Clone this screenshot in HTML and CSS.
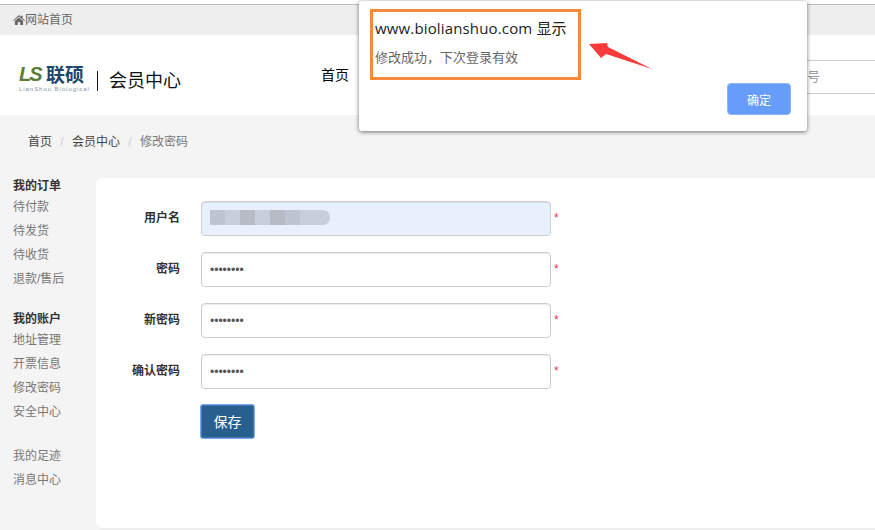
FILE: index.html
```html
<!DOCTYPE html>
<html lang="zh-CN">
<head>
<meta charset="utf-8">
<title>修改密码</title>
<link rel="stylesheet" href="styles.css">
</head>
<body>
<div class="topbar">
  <svg class="home" viewBox="0 0 12 10" aria-hidden="true"><path d="M6 0 L8 1.8 V.8 H9.6 V3.2 L12 5.4 L11.3 6.1 L6 1.5 L.7 6.1 L0 5.4 Z M1.9 6 L6 2.5 L10.1 6 V10 H7.2 V7 H4.8 V10 H1.9 Z"/></svg>
  <span>网站首页</span>
</div>
<header class="header">
  <div class="logo">
    <div class="logo-top"><span class="logo-ls">LS</span><span class="logo-cn">联硕</span></div>
    <div class="logo-en">LianShuo Biological</div>
  </div>
  <div class="logo-sep"></div>
  <div class="logo-title">会员中心</div>
  <nav class="nav"><a>首页</a></nav>
  <div class="search">号</div>
</header>
<div class="crumbs">
  <span>首页</span><i>/</i><span>会员中心</span><i>/</i><span class="cur">修改密码</span>
</div>
<main class="content">
  <aside class="side">
    <h4>我的订单</h4>
    <a>待付款</a><a>待发货</a><a>待收货</a><a>退款/售后</a>
    <h4 class="gap">我的账户</h4>
    <a>地址管理</a><a>开票信息</a><a>修改密码</a><a>安全中心</a>
    <a class="gap2">我的足迹</a><a>消息中心</a>
  </aside>
  <section class="card">
    <div class="row">
      <label>用户名</label>
      <div class="field filled"><div class="mosaic"><b></b><b class="l"></b><b class="d"></b><b class="l"></b><b class="d"></b><b></b><b class="l"></b><b class="l"></b></div></div>
      <em>*</em>
    </div>
    <div class="row">
      <label>密码</label>
      <input class="field" type="password" value="12345678">
      <em>*</em>
    </div>
    <div class="row">
      <label>新密码</label>
      <input class="field" type="password" value="12345678">
      <em>*</em>
    </div>
    <div class="row">
      <label>确认密码</label>
      <input class="field" type="password" value="12345678">
      <em>*</em>
    </div>
    <button class="save" type="button">保存</button>
  </section>
</main>
<div class="dialog">
  <div class="dlg-title">www.biolianshuo.com 显示</div>
  <div class="dlg-msg">修改成功，下次登录有效</div>
  <button class="dlg-ok" type="button">确定</button>
</div>
<div class="mark-box"></div>
<svg class="mark-arrow" viewBox="0 0 64 27" aria-hidden="true"><path d="M0 1 L18 0 L19 4 L63 26 L17 11 L12 15 Z"/></svg>
</body>
</html>
```
FILE: styles.css
```css
* { box-sizing: border-box; }
html, body { margin: 0; height: 530px; overflow: hidden; }
body {
  background: #f4f4f4;
  color: #333;
  font: 12px/20px "Liberation Sans", "Noto Sans CJK SC", sans-serif;
  padding-top: 4px;
  position: relative;
  box-shadow: inset 0 4px 0 #fff;
}
.topbar {
  height: 31px;
  background: #eee;
  border-top: 1px solid #bdbdbd;
  padding: 0 0 1px 13px;
  display: flex;
  align-items: center;
  color: #666;
}
.home { width: 12px; height: 10px; fill: #666; margin-right: 0; }
.header {
  height: 80px;
  background: #fff;
  display: flex;
  align-items: center;
  padding-left: 19px;
  position: relative;
}
.logo { width: 66px; margin-top: 7px; }
.logo-top { display: flex; align-items: center; height: 18px; }
.logo-ls {
  font: italic bold 20px/18px "Liberation Sans", sans-serif;
  color: #5b7e35;
  letter-spacing: -2px;
  width: 27px;
}
.logo-cn {
  font: bold 19px/18px "Noto Sans CJK SC", sans-serif;
  color: #20466a;
  white-space: nowrap;
}
.logo-en {
  font: 6px/7px "Liberation Sans", sans-serif;
  color: #7f93a8;
  letter-spacing: .95px;
  white-space: nowrap;
  margin-top: 3px;
}
.logo-sep { width: 1px; height: 20px; background: #111; margin: 11px 0 0 12px; }
.logo-title { font-size: 18px; color: #111; margin: 11px 0 0 11px; }
.nav { margin: 0 0 0 140px; color: #000; font-size: 14px; padding-bottom: 1px; }
.search {
  position: absolute;
  left: 795px;
  right: 0;
  top: 25px;
  height: 34px;
  border: 1px solid #ccc;
  border-width: 1px 0;
  padding-left: 12px;
  line-height: 32px;
  color: #999;
  font-size: 13px;
}
.crumbs {
  height: 63px;
  padding: 17px 0 0 28px;
  display: flex;
  color: #444;
}
.crumbs i { font-style: normal; color: #ccc; width: 20px; text-align: center; }
.crumbs .cur { color: #777; }
.content { display: flex; height: 350px; }
.side { width: 96px; padding: 0 0 0 13px; color: #777; }
.side h4 { margin: 0 0 1px; font-size: 12px; line-height: 16px; color: #333; font-weight: bold; }
.side a { display: block; line-height: 24px; }
.side h4.gap { margin: 20px 0 1px; }
.side a.gap2 { margin-top: 20px; }
.card {
  flex: 1;
  background: #fff;
  border-radius: 6px 0 0 6px;
  padding: 23px 0 0 0;
  display: flex;
  flex-direction: column;
  box-shadow: 0 2px 0 #eee;
}
.row { display: flex; align-items: center; height: 35px; margin-bottom: 16px; }
.row label { width: 84px; text-align: right; margin-right: 21px; padding-bottom: 2px; color: #333; font-weight: bold; }
.field {
  width: 350px;
  height: 35px;
  border: 1px solid #ccc;
  border-radius: 4px;
  background: #fff;
  padding: 0 8px;
  color: #555;
  font: 12px "Liberation Sans", sans-serif;
  outline: none;
  box-shadow: inset 0 1px 1px rgba(0,0,0,.075);
}
.filled { background: #e8f0fe; padding: 8px 8px; }
.mosaic {
  display: flex;
  width: 120px;
  height: 15px;
  border-radius: 0 7px 7px 0;
  overflow: hidden;
}
.mosaic b { flex: 1; background: #bfc5d0; }
.mosaic b.d { background: #b7bbc6; }
.mosaic b.l { background: #c8cedb; }
.row em { font-style: normal; color: #f0325a; margin-left: 3px; font-size: 12px; line-height: 14px; padding-bottom: 1px; }
.save {
  align-self: flex-start;
  margin: -1px 0 0 104px;
  width: 55px;
  height: 35px;
  background: #285f8f;
  color: #fff;
  border: 1px solid #7aa7ee;
  border-radius: 3px;
  box-shadow: inset 0 0 0 1px rgba(122,167,238,.35);
  font: 14px "Liberation Sans", "Noto Sans CJK SC", sans-serif;
  padding: 0 0 2px;
}
.dialog {
  position: absolute;
  left: 359px;
  top: 1px;
  width: 448px;
  height: 130px;
  background: #fff;
  border-radius: 3px;
  box-shadow: 0 1px 4px rgba(0,0,0,.55);
  padding: 16px 0 0 16px;
}
.dlg-title { font: 15px/22px "Open Sans", "Noto Sans CJK SC", sans-serif; letter-spacing: .15px; color: #222; }
.dlg-msg { font-size: 13px; line-height: 20px; color: #666; margin-top: 9px; }
.dlg-ok {
  position: absolute;
  left: 368px;
  top: 82px;
  width: 64px;
  height: 32px;
  background: #659df8;
  border: 1px solid #8db6f5;
  border-radius: 4px;
  color: #fff;
  font: 12px "Liberation Sans", "Noto Sans CJK SC", sans-serif;
  padding: 0;
}
.mark-box {
  position: absolute;
  left: 370px;
  top: 9px;
  width: 211px;
  height: 71px;
  border: 3px solid #f58a3c;
}
.mark-arrow {
  position: absolute;
  left: 589px;
  top: 43px;
  width: 64px;
  height: 27px;
  fill: #fb3b3b;
}
```
